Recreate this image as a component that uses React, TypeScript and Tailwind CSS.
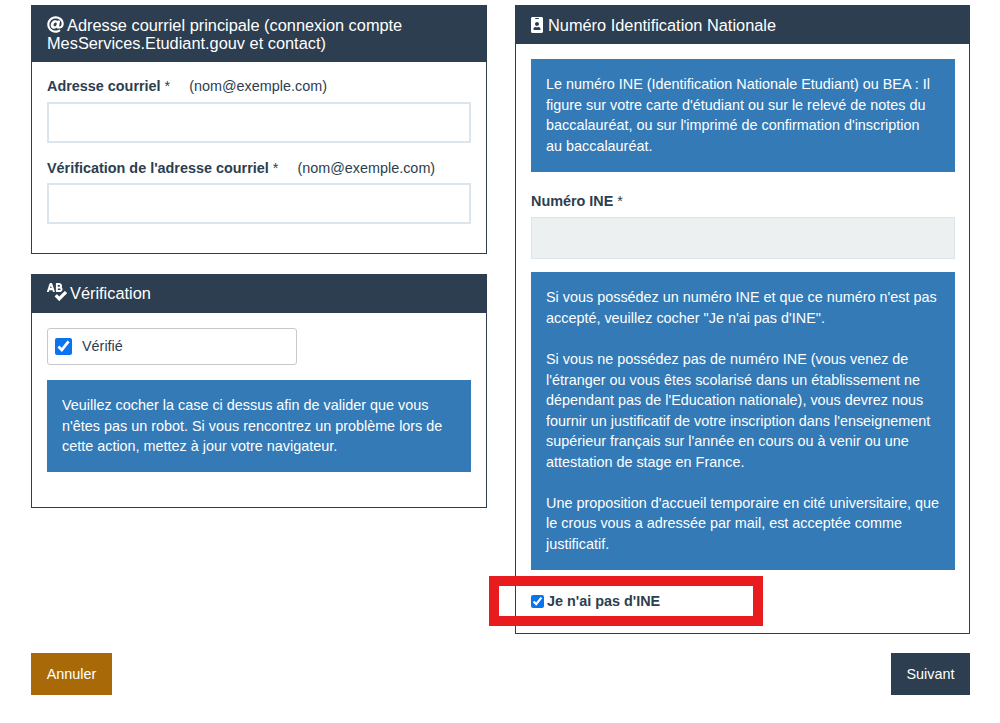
import { FaAt, FaIdBadge, FaSpellCheck } from "react-icons/fa";

function Header({ children }: { children: React.ReactNode }) {
  return <div className="bg-[#2c3e50] px-[15px] py-[10px] text-[16.35px] leading-[18px] text-white">{children}</div>;
}

function Field({ label, hint, labelClass }: { label: string; hint: string; labelClass: string }) {
  return (
    <div className="mb-[15px]">
      <div className={`${labelClass} flex h-5 items-center leading-5`}>
        <span className="font-bold">{label}</span>
        <span className="ml-[4px]">*</span>
        <span className="ml-[19px]">{hint}</span>
      </div>
      <div className="h-[41px] border-2 border-[#dce4ec] bg-white" />
    </div>
  );
}

function Alert({ children, className = "" }: { children: React.ReactNode; className?: string }) {
  return <div className={`whitespace-nowrap bg-[#337ab7] px-[15px] pt-[15px] pb-[15.5px] text-white ${className}`}>{children}</div>;
}

export default function App() {
  return (
    <div className="h-[723px] w-[1000px] overflow-hidden bg-white px-[30px] pt-[5px] text-[14.4px] leading-[20.57px] text-[#2c3e50] [font-family:'Liberation_Sans',Arial,sans-serif]">
      <div className="flex h-[628px] items-start gap-[28px]">
        <div className="w-[457px] pl-px">
          <section className="border border-[#2c3e50]">
            <Header>
              <FaAt className="mr-[3px] inline-block size-[17px] align-[-2px]" />
              Adresse courriel principale (connexion compte
              <br />
              MesServices.Etudiant.gouv et contact)
            </Header>
            <div className="px-[15px] pt-[14px] pb-[14px]">
              <Field label="Adresse courriel" labelClass="mb-[6px]" hint="(nom@exemple.com)" />
              <Field label="Vérification de l'adresse courriel" labelClass="mb-[5px]" hint="(nom@exemple.com)" />
            </div>
          </section>
          <section className="mt-[20px] border border-[#2c3e50]">
            <Header>
              <div className="flex h-[18px] -translate-y-px items-center gap-[3px]">
                <FaSpellCheck className="size-[20px] -translate-y-px" />
                Vérification
              </div>
            </Header>
            <div className="px-[15px] pt-[15px] pb-[35px]">
              <label className="flex h-[37px] w-[250px] items-center gap-[10px] rounded-[3px] border border-[#c8c8c8] bg-white pl-[7px]">
                <input type="checkbox" defaultChecked className="m-0 size-[17px] accent-[#0a74f0]" />
                Vérifié
              </label>
              <Alert className="mt-[15px]">
                Veuillez cocher la case ci dessus afin de valider que vous
                <br />
                n'êtes pas un robot. Si vous rencontrez un problème lors de
                <br />
                cette action, mettez à jour votre navigateur.
              </Alert>
            </div>
          </section>
        </div>
        <section className="relative w-[455px] border border-[#2c3e50]">
          <Header>
            <div className="flex h-[18px] items-center gap-[5px]">
              <FaIdBadge className="h-[16px] w-[12px]" />
              Numéro Identification Nationale
            </div>
          </Header>
          <div className="pt-[15px] pr-[14px] pl-[15px]">
            <Alert>
              Le numéro INE (Identification Nationale Etudiant) ou BEA : Il
              <br />
              figure sur votre carte d'étudiant ou sur le relevé de notes du
              <br />
              baccalauréat, ou sur l'imprimé de confirmation d'inscription
              <br />
              au baccalauréat.
            </Alert>
            <div className="mt-[19.4px] mb-[5.6px] font-bold">
              Numéro INE <span className="font-normal">*</span>
            </div>
            <div className="h-[42px] border border-[#dce4ec] bg-[#ecf0f1]" />
            <Alert className="mt-[13px]">
              Si vous possédez un numéro INE et que ce numéro n'est pas
              <br />
              accepté, veuillez cocher "Je n'ai pas d'INE".
              <br />
              <br />
              Si vous ne possédez pas de numéro INE (vous venez de
              <br />
              l'étranger ou vous êtes scolarisé dans un établissement ne
              <br />
              dépendant pas de l'Education nationale), vous devrez nous
              <br />
              fournir un justificatif de votre inscription dans l'enseignement
              <br />
              supérieur français sur l'année en cours ou à venir ou une
              <br />
              attestation de stage en France.
              <br />
              <br />
              Une proposition d'accueil temporaire en cité universitaire, que
              <br />
              le crous vous a adressée par mail, est acceptée comme
              <br />
              justificatif.
            </Alert>
            <label className="flex h-[63px] items-center gap-[3px] font-bold">
              <input type="checkbox" defaultChecked className="m-0 size-[13px] accent-[#0a74f0]" />
              Je n'ai pas d'INE
            </label>
          </div>
          <div className="absolute top-[570px] left-[-27px] h-[50px] w-[274px] border-[10px] border-[#e81c1f]" />
        </section>
      </div>
      <div className="mt-[20px] flex justify-between pl-px">
        <button className="h-[42px] w-[81px] bg-[#a86a08] text-white">Annuler</button>
        <button className="h-[42px] w-[79px] bg-[#2c3e50] text-white">Suivant</button>
      </div>
    </div>
  );
}
